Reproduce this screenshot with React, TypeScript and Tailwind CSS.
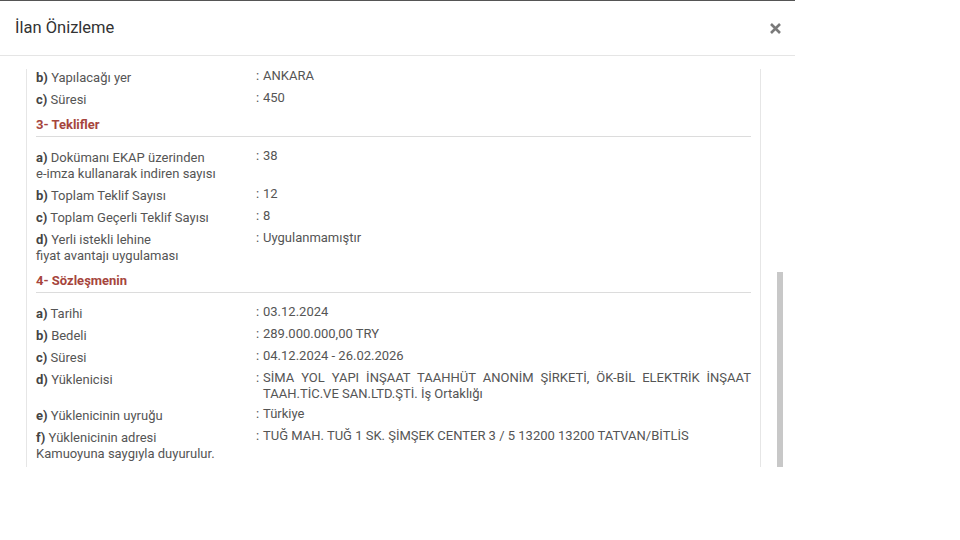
import React from "react";

type Row = { k: string; label: React.ReactNode; value: React.ReactNode; justify?: boolean };

function Item({ k, label, value, justify }: Row) {
  return (
    <div className="grid grid-cols-[220px_1fr]">
      <div className="pt-[3px] pb-[3px] leading-[16px]">
        <span className="font-bold text-[#444]">{k}</span> {label}
      </div>
      <div className="flex pt-[1px] pb-[3px] leading-[16px]">
        <span className="w-[7px] shrink-0">:</span>
        <div className={justify ? "flex-1 text-justify" : "flex-1"}>{value}</div>
      </div>
    </div>
  );
}

function Heading({ children }: { children: React.ReactNode }) {
  return (
    <div className="mt-[6px] mb-[10px] pb-[3px] border-b border-[#dcdcdc] leading-[16px] font-bold text-[#a6453d]">
      {children}
    </div>
  );
}

export default function App() {
  return (
    <div
      className="w-[960px] h-[540px] bg-white text-[13px] text-[#555]"
      style={{ fontFamily: "Roboto, 'Noto Sans', Arial, sans-serif" }}
    >
      <div className="w-[795px] bg-white border-t border-[#555]">
        <div className="h-[55px] flex items-center justify-between pl-[15px] pr-[14px] border-b border-[#e5e5e5]">
          <div className="text-[16.5px] text-[#333] pt-[1px]">İlan Önizleme</div>
          <svg width="11" height="11" viewBox="0 0 11 11">
            <path d="M1 1L10 10M10 1L1 10" stroke="#7a7a7a" strokeWidth="2.6" strokeLinecap="butt" />
          </svg>
        </div>
        <div className="pt-[13px] pl-[26px] flex">
          <div className="w-[735px] h-[398px] border-x border-[#e6e6e6] overflow-hidden px-[9px]">
            <div className="-mt-[2px]">
              <Item k="b)" label="Yapılacağı yer" value="ANKARA" />
              <Item k="c)" label="Süresi" value="450" />
              <Heading>3- Teklifler</Heading>
              <Item
                k="a)"
                label={
                  <>
                    Dokümanı EKAP üzerinden
                    <br />
                    e-imza kullanarak indiren sayısı
                  </>
                }
                value="38"
              />
              <Item k="b)" label="Toplam Teklif Sayısı" value="12" />
              <Item k="c)" label="Toplam Geçerli Teklif Sayısı" value="8" />
              <Item
                k="d)"
                label={
                  <>
                    Yerli istekli lehine
                    <br />
                    fiyat avantajı uygulaması
                  </>
                }
                value="Uygulanmamıştır"
              />
              <Heading>4- Sözleşmenin</Heading>
              <Item k="a)" label="Tarihi" value="03.12.2024" />
              <Item k="b)" label="Bedeli" value="289.000.000,00 TRY" />
              <Item k="c)" label="Süresi" value="04.12.2024 - 26.02.2026" />
              <Item
                k="d)"
                label="Yüklenicisi"
                justify
                value="SİMA YOL YAPI İNŞAAT TAAHHÜT ANONİM ŞİRKETİ, ÖK-BİL ELEKTRİK İNŞAAT TAAH.TİC.VE SAN.LTD.ŞTİ. İş Ortaklığı"
              />
              <Item k="e)" label="Yüklenicinin uyruğu" value="Türkiye" />
              <Item
                k="f)"
                label={
                  <>
                    Yüklenicinin adresi
                    <br />
                    <span className="font-normal">Kamuoyuna saygıyla duyurulur.</span>
                  </>
                }
                value="TUĞ MAH. TUĞ 1 SK. ŞİMŞEK CENTER 3 / 5 13200 13200 TATVAN/BİTLİS"
              />
            </div>
          </div>
          <div className="ml-[16px] w-[6px] pt-[203px]">
            <div className="h-[195px] bg-[#c8c8c8]" />
          </div>
        </div>
      </div>
    </div>
  );
}
